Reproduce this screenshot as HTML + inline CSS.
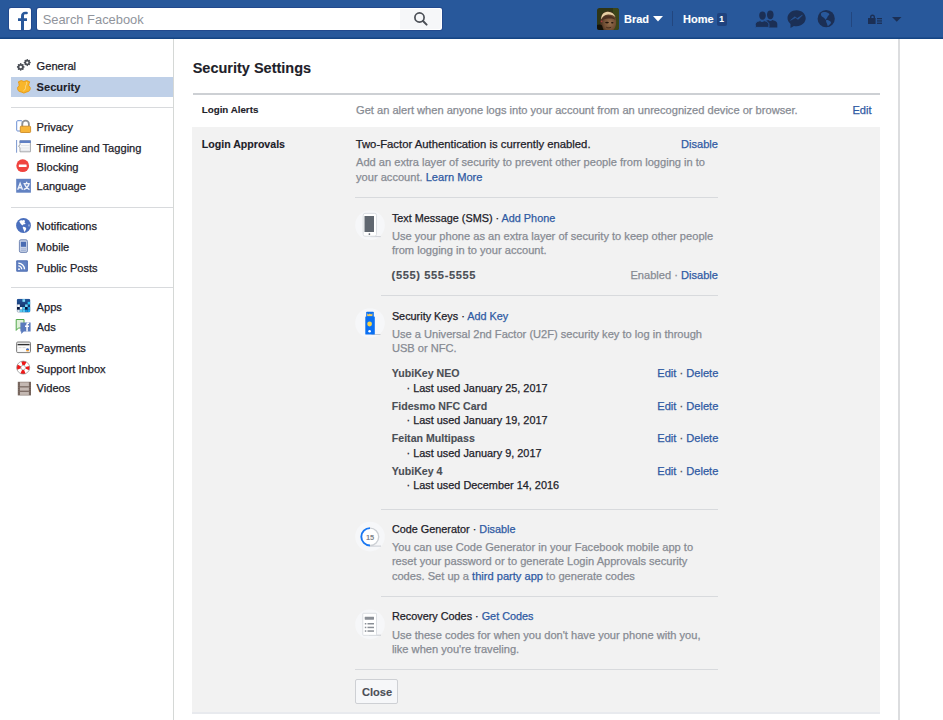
<!DOCTYPE html>
<html><head><meta charset="utf-8"><style>
html,body{margin:0;padding:0;width:943px;height:720px;overflow:hidden;background:#fff;position:relative}
body{font-family:"Liberation Sans",sans-serif}
.t{position:absolute;white-space:nowrap;font-family:"Liberation Sans",sans-serif;-webkit-text-stroke:0.25px currentColor}
.b{-webkit-text-stroke:0.12px currentColor}
</style></head><body>
<div style="position:absolute;left:0px;top:0px;width:943px;height:39px;background:#28589b;border-bottom:2px solid #154584;box-sizing:border-box"></div>
<div style="position:absolute;left:0px;top:36.5px;width:943px;height:1px;background:#1d4d8e"></div>
<div style="position:absolute;left:9px;top:8px;width:22px;height:22px;background:#fff;border-radius:2px;box-shadow:0 0 0 1px #22498d"></div>
<svg style="position:absolute;left:9px;top:8px" width="22" height="22" viewBox="0 0 22 22"><path d="M12 22V13H9v-2.800h3V8.200C12 5.400 13.700 3.800 16.300 3.800h1.300a1.250 1.250 0 010 2.500h-1.200c-.9 0-1.400.5-1.400 1.400v2.500h3V13h-3v9z" fill="#28589b"/></svg>
<div style="position:absolute;left:37px;top:8px;width:404.5px;height:22px;background:#fff;border-radius:2px;box-shadow:0 0 0 1px #22498d"></div>
<div style="position:absolute;left:400px;top:9px;width:40.5px;height:20px;background:#f6f7f9;border-radius:0 2px 2px 0"></div>
<div class="t" style="left:42.70px;top:10.63px;font-size:12.9px;line-height:17px;font-weight:normal;color:#90949c;-webkit-text-stroke:0">Search Facebook</div>
<svg style="position:absolute;left:412px;top:10px" width="18" height="18" viewBox="0 0 18 18"><circle cx="7.5" cy="7.5" r="4.6" fill="none" stroke="#4b4f56" stroke-width="1.7"/><path d="M11 11l3.6 3.6" stroke="#4b4f56" stroke-width="2" stroke-linecap="round"/></svg>
<svg style="position:absolute;left:597px;top:8px" width="22" height="22" viewBox="0 0 22 22"><defs><clipPath id="av"><rect width="22" height="22" rx="2.5"/></clipPath><radialGradient id="fg" cx="0.6" cy="0.62" r="0.55"><stop offset="0" stop-color="#96704e"/><stop offset=".7" stop-color="#6e4c32"/><stop offset="1" stop-color="#4a3220"/></radialGradient></defs><g clip-path="url(#av)"><rect width="22" height="22" fill="#2f3516"/><rect x="16" y="0" width="6" height="22" fill="#3c4619"/><path d="M3.800 22C2.600 15 3 9 5.500 5.800c2.800-3.300 8.500-3.300 11.200 0 2 2.500 2.800 6.500 2.300 10.500-.4 2.800-1.600 4.500-2.500 5.700z" fill="url(#fg)"/><path d="M4.200 11.500C4 7 6.500 4 10.500 3.800c4-.2 6.800 2 8 5.500-1.500-1.800-3.600-3-7.400-2.900C7.500 6.600 5.600 8.500 4.200 11.500z" fill="#e6cfa2"/><path d="M4.500 12.500c1-3.400 3.400-5 6.700-5.100 3.500 0 6 1.600 7.400 4.500-2.200-1.200-4.300-1.500-7.300-1.300-2.900.2-5.200.9-6.800 1.900z" fill="#4a3020"/><ellipse cx="10" cy="14.600" rx="1.900" ry=".8" fill="#23160c"/><ellipse cx="15.300" cy="14.800" rx="1.300" ry=".7" fill="#23160c"/><circle cx="4.600" cy="13.300" r=".9" fill="#a84040"/><path d="M0 22v-5c2.200-1 4-.5 5 .5l1.500 4.500z" fill="#141208"/><path d="M9.300 19.300c1.500.7 3.300.7 4.800 0" stroke="#3a2414" stroke-width=".8" fill="none"/></g></svg>
<div class="t b" style="left:624.00px;top:12.19px;font-size:11.0px;line-height:14px;font-weight:bold;color:#fff;">Brad</div>
<svg style="position:absolute;left:653px;top:16px" width="10" height="6" viewBox="0 0 10 6"><path d="M0 0h10L5 5.6z" fill="#fff"/></svg>
<div style="position:absolute;left:672px;top:11px;width:1px;height:15px;background:#22467f"></div>
<div class="t b" style="left:683.00px;top:12.19px;font-size:11.0px;line-height:14px;font-weight:bold;color:#fff;">Home</div>
<div style="position:absolute;left:717px;top:12.5px;width:9.5px;height:13px;background:#1f427e;border-radius:2px"></div>
<div class="t b" style="left:719.20px;top:14.15px;font-size:8.5px;line-height:11px;font-weight:bold;color:#fff;">1</div>
<svg style="position:absolute;left:0;top:0" width="943" height="40" viewBox="0 0 943 40"><g fill="#1b2f55" stroke="#28589b" stroke-width="1"><path d="M762.500 19.800c1.900 0 3.300-1.900 3.300-4.300 0-2.400-1.300-3.900-3.300-3.900s-3.300 1.500-3.300 3.900c0 2.400 1.400 4.300 3.300 4.300zM770.300 19.300c2 0 3.300-2.100 3.300-4.600 0-2.500-1.300-4.100-3.300-4.100s-3.300 1.600-3.300 4.100c0 2.500 1.300 4.600 3.300 4.600zM766.500 27.400h10.800v-3.300c0-1.800-1.400-2.800-3.500-3.500l-1.500-.5c-.6.700-1.300 1-2 1s-1.400-.3-2-1l-1.500.5c-1.200.4-2 1-2.400 1.700" stroke="none"/><path d="M755.300 27.400h13.600v-3c0-1.800-1.500-2.700-3.600-3.400l-1.200-.4c-.6.600-1.300.900-2 .900s-1.400-.3-2-.9l-1.200.4c-2.100.7-3.600 1.600-3.600 3.400z"/></g><path d="M796.600 10.300c-5 0-9.100 3.500-9.100 7.800 0 2.300 1.100 4.300 3 5.800v4.100l3.400-2.100c.900.2 1.800.3 2.700.3 5 0 9.100-3.500 9.100-7.900s-4.100-8-9.100-8z" fill="#1b2f55"/><path d="M790.500 20.300l4.300-3.600 2.300 1.900 5.300-3.500-4.300 4.400-2.300-1.900z" fill="#28589b" stroke="#28589b" stroke-width=".5" stroke-linejoin="round"/><circle cx="826.200" cy="18.700" r="8.600" fill="#1b2f55"/><path d="M821 13.500C822 12.300 824.500 11.800 826.500 12.300 828 12.700 829.500 13.500 829.300 14.800 828.500 15.500 827.800 16 827.500 17 827 18 826.300 19.200 825.500 19.800 824.800 19 824.500 18 823.500 17.500 822.300 17 821.300 16 821 15z" fill="#28589b"/><path d="M826.200 20C827.800 19.800 829.500 20.500 830.500 21.500 831.500 22.500 830.800 23.500 830 24.300 829.200 25 828.500 25.600 827.800 26.300 827.300 25.300 827.300 24.200 826.800 23.200 826.200 22.200 825.800 21 826.200 20z" fill="#28589b"/></svg>
<div style="position:absolute;left:851px;top:12px;width:1px;height:15px;background:#22467f"></div>
<svg style="position:absolute;left:868px;top:14px" width="15" height="10" viewBox="0 0 15 10"><path d="M2 4V3a2.5 2.5 0 015 0v1h.6v6H0V4zm1.4 0h2.2V3a1.1 1.1 0 00-2.2 0z" fill="#1b2f55"/><rect x="9" y="4" width="5" height="1.3" fill="#1b2f55"/><rect x="9" y="6.3" width="5" height="1.3" fill="#1b2f55"/><rect x="9" y="8.6" width="5" height="1.3" fill="#1b2f55"/></svg>
<svg style="position:absolute;left:892px;top:17px" width="10" height="5" viewBox="0 0 10 5"><path d="M0 0h9.5L4.75 4.8z" fill="#1b2f55"/></svg>
<div style="position:absolute;left:173px;top:39px;width:1px;height:681px;background:#d5d8d6"></div>
<div style="position:absolute;left:11px;top:77px;width:162px;height:20px;background:#bfd0e8"></div>
<div style="position:absolute;left:11px;top:107px;width:162px;height:1px;background:#d8dadd"></div>
<div style="position:absolute;left:11px;top:207px;width:162px;height:1px;background:#d8dadd"></div>
<div style="position:absolute;left:11px;top:287px;width:162px;height:1px;background:#d8dadd"></div>
<div class="t" style="left:36.60px;top:59.35px;font-size:11.1px;line-height:14px;font-weight:normal;color:#1d2129;">General</div>
<div class="t b" style="left:36.60px;top:80.35px;font-size:11.1px;line-height:14px;font-weight:bold;color:#1d2129;">Security</div>
<div class="t" style="left:36.60px;top:119.75px;font-size:11.1px;line-height:14px;font-weight:normal;color:#1d2129;">Privacy</div>
<div class="t" style="left:36.60px;top:140.85px;font-size:11.1px;line-height:14px;font-weight:normal;color:#1d2129;">Timeline and Tagging</div>
<div class="t" style="left:36.60px;top:160.25px;font-size:11.1px;line-height:14px;font-weight:normal;color:#1d2129;">Blocking</div>
<div class="t" style="left:36.60px;top:179.15px;font-size:11.1px;line-height:14px;font-weight:normal;color:#1d2129;">Language</div>
<div class="t" style="left:36.60px;top:219.45px;font-size:11.1px;line-height:14px;font-weight:normal;color:#1d2129;">Notifications</div>
<div class="t" style="left:36.60px;top:240.45px;font-size:11.1px;line-height:14px;font-weight:normal;color:#1d2129;">Mobile</div>
<div class="t" style="left:36.60px;top:261.05px;font-size:11.1px;line-height:14px;font-weight:normal;color:#1d2129;">Public Posts</div>
<div class="t" style="left:36.60px;top:299.65px;font-size:11.1px;line-height:14px;font-weight:normal;color:#1d2129;">Apps</div>
<div class="t" style="left:36.60px;top:319.95px;font-size:11.1px;line-height:14px;font-weight:normal;color:#1d2129;">Ads</div>
<div class="t" style="left:36.60px;top:340.85px;font-size:11.1px;line-height:14px;font-weight:normal;color:#1d2129;">Payments</div>
<div class="t" style="left:36.60px;top:361.65px;font-size:11.1px;line-height:14px;font-weight:normal;color:#1d2129;">Support Inbox</div>
<div class="t" style="left:36.60px;top:381.15px;font-size:11.1px;line-height:14px;font-weight:normal;color:#1d2129;">Videos</div>
<div class="t b" style="left:192.70px;top:59.37px;font-size:14.5px;line-height:19px;font-weight:bold;color:#1d2129;">Security Settings</div>
<div style="position:absolute;left:192.5px;top:93px;width:687.5px;height:1.5px;background:#cdd0d4"></div>
<div class="t b" style="left:201.80px;top:103.32px;font-size:9.75px;line-height:13px;font-weight:bold;color:#1d2129;">Login Alerts</div>
<div class="t" style="left:356.00px;top:103.15px;font-size:11.1px;line-height:14px;font-weight:normal;color:#878b93;">Get an alert when anyone logs into your account from an unrecognized device or browser.</div>
<div class="t" style="right:71.50px;top:103.35px;font-size:11.1px;line-height:14px;font-weight:normal;color:#2f5aa3;">Edit</div>
<div style="position:absolute;left:192px;top:127px;width:688px;height:585px;background:#f2f2f2"></div>
<div style="position:absolute;left:192px;top:712px;width:688px;height:1.5px;background:#e8eaee"></div>
<div class="t b" style="left:201.80px;top:136.82px;font-size:10.6px;line-height:14px;font-weight:bold;color:#1d2129;">Login Approvals</div>
<div class="t" style="left:355.70px;top:136.58px;font-size:11.3px;line-height:15px;font-weight:normal;color:#1d2129;">Two-Factor Authentication is currently enabled.</div>
<div class="t" style="right:225.00px;top:137.15px;font-size:11.1px;line-height:14px;font-weight:normal;color:#2f5aa3;">Disable</div>
<div class="t" style="left:356.00px;top:155.15px;font-size:11.1px;line-height:14px;font-weight:normal;color:#878b93;">Add an extra layer of security to prevent other people from logging in to</div>
<div class="t" style="left:356.00px;top:170.05px;font-size:11.1px;line-height:14px;font-weight:normal;color:#878b93;">your account. <span style="color:#2f5aa3">Learn More</span></div>
<div style="position:absolute;left:355px;top:197px;width:363px;height:1px;background:#d8dadd"></div>
<div class="t" style="left:391.90px;top:211.04px;font-size:10.85px;line-height:14px;font-weight:normal;color:#1d2129;">Text Message (SMS) · <span style="color:#2f5aa3">Add Phone</span></div>
<div class="t" style="left:391.90px;top:228.95px;font-size:11.1px;line-height:14px;font-weight:normal;color:#878b93;">Use your phone as an extra layer of security to keep other people</div>
<div class="t" style="left:391.90px;top:242.75px;font-size:11.1px;line-height:14px;font-weight:normal;color:#878b93;">from logging in to your account.</div>
<div class="t b" style="left:391.60px;top:268.15px;font-size:11.1px;line-height:14px;font-weight:bold;color:#4b4f56;letter-spacing:0.62px">(555) 555-5555</div>
<div class="t" style="right:225.00px;top:268.15px;font-size:11.1px;line-height:14px;font-weight:normal;color:#878b93;">Enabled · <span style="color:#2f5aa3">Disable</span></div>
<div style="position:absolute;left:381px;top:295px;width:337px;height:1px;background:#d8dadd"></div>
<div class="t" style="left:391.90px;top:308.64px;font-size:10.85px;line-height:14px;font-weight:normal;color:#1d2129;">Security Keys · <span style="color:#2f5aa3">Add Key</span></div>
<div class="t" style="left:391.90px;top:326.75px;font-size:11.1px;line-height:14px;font-weight:normal;color:#878b93;">Use a Universal 2nd Factor (U2F) security key to log in through</div>
<div class="t" style="left:391.90px;top:340.95px;font-size:11.1px;line-height:14px;font-weight:normal;color:#878b93;">USB or NFC.</div>
<div class="t b" style="left:391.80px;top:366.12px;font-size:10.6px;line-height:14px;font-weight:bold;color:#4b4f56;">YubiKey NEO</div>
<div class="t" style="left:406.50px;top:380.82px;font-size:10.9px;line-height:14px;font-weight:normal;color:#1d2129;">· Last used January 25, 2017</div>
<div class="t" style="right:224.70px;top:365.95px;font-size:11.1px;line-height:14px;font-weight:normal;color:#4b4f56;"><span style="color:#2f5aa3">Edit</span> · <span style="color:#2f5aa3">Delete</span></div>
<div class="t b" style="left:391.80px;top:399.32px;font-size:10.6px;line-height:14px;font-weight:bold;color:#4b4f56;">Fidesmo NFC Card</div>
<div class="t" style="left:406.50px;top:413.32px;font-size:10.9px;line-height:14px;font-weight:normal;color:#1d2129;">· Last used January 19, 2017</div>
<div class="t" style="right:224.70px;top:399.15px;font-size:11.1px;line-height:14px;font-weight:normal;color:#4b4f56;"><span style="color:#2f5aa3">Edit</span> · <span style="color:#2f5aa3">Delete</span></div>
<div class="t b" style="left:391.80px;top:431.12px;font-size:10.6px;line-height:14px;font-weight:bold;color:#4b4f56;">Feitan Multipass</div>
<div class="t" style="left:406.50px;top:446.12px;font-size:10.9px;line-height:14px;font-weight:normal;color:#1d2129;">· Last used January 9, 2017</div>
<div class="t" style="right:224.70px;top:430.95px;font-size:11.1px;line-height:14px;font-weight:normal;color:#4b4f56;"><span style="color:#2f5aa3">Edit</span> · <span style="color:#2f5aa3">Delete</span></div>
<div class="t b" style="left:391.80px;top:463.82px;font-size:10.6px;line-height:14px;font-weight:bold;color:#4b4f56;">YubiKey 4</div>
<div class="t" style="left:406.50px;top:478.42px;font-size:10.9px;line-height:14px;font-weight:normal;color:#1d2129;">· Last used December 14, 2016</div>
<div class="t" style="right:224.70px;top:463.65px;font-size:11.1px;line-height:14px;font-weight:normal;color:#4b4f56;"><span style="color:#2f5aa3">Edit</span> · <span style="color:#2f5aa3">Delete</span></div>
<div style="position:absolute;left:381px;top:509px;width:337px;height:1px;background:#d8dadd"></div>
<div class="t" style="left:391.90px;top:522.24px;font-size:10.85px;line-height:14px;font-weight:normal;color:#1d2129;">Code Generator · <span style="color:#2f5aa3">Disable</span></div>
<div class="t" style="left:391.90px;top:540.15px;font-size:11.1px;line-height:14px;font-weight:normal;color:#878b93;">You can use Code Generator in your Facebook mobile app to</div>
<div class="t" style="left:391.90px;top:554.45px;font-size:11.1px;line-height:14px;font-weight:normal;color:#878b93;">reset your password or to generate Login Approvals security</div>
<div class="t" style="left:391.90px;top:568.95px;font-size:11.1px;line-height:14px;font-weight:normal;color:#878b93;">codes. Set up a <span style="color:#2f5aa3">third party app</span> to generate codes</div>
<div style="position:absolute;left:381px;top:595.5px;width:337px;height:1px;background:#d8dadd"></div>
<div class="t" style="left:391.90px;top:608.94px;font-size:10.85px;line-height:14px;font-weight:normal;color:#1d2129;">Recovery Codes · <span style="color:#2f5aa3">Get Codes</span></div>
<div class="t" style="left:391.90px;top:627.85px;font-size:11.1px;line-height:14px;font-weight:normal;color:#878b93;">Use these codes for when you don't have your phone with you,</div>
<div class="t" style="left:391.90px;top:642.05px;font-size:11.1px;line-height:14px;font-weight:normal;color:#878b93;">like when you're traveling.</div>
<div style="position:absolute;left:355px;top:669px;width:363px;height:1px;background:#d8dadd"></div>
<div style="position:absolute;left:355px;top:679px;width:42.8px;height:24.6px;background:#f6f7f9;border:1px solid #ced0d4;border-radius:2px;box-sizing:border-box"></div>
<div class="t b" style="left:362.00px;top:684.65px;font-size:11.1px;line-height:14px;font-weight:bold;color:#4b4f56;">Close</div>
<svg style="position:absolute;left:0;top:0" width="943" height="720" viewBox="0 0 943 720"><circle cx="20.7" cy="66.9" r="2.96" fill="#4b4f56"/><circle cx="23.66" cy="66.90" r="0.89" fill="#4b4f56"/><circle cx="22.79" cy="68.99" r="0.89" fill="#4b4f56"/><circle cx="20.70" cy="69.86" r="0.89" fill="#4b4f56"/><circle cx="18.61" cy="68.99" r="0.89" fill="#4b4f56"/><circle cx="17.74" cy="66.90" r="0.89" fill="#4b4f56"/><circle cx="18.61" cy="64.81" r="0.89" fill="#4b4f56"/><circle cx="20.70" cy="63.94" r="0.89" fill="#4b4f56"/><circle cx="22.79" cy="64.81" r="0.89" fill="#4b4f56"/><circle cx="20.7" cy="66.9" r="1.25" fill="#fff"/><circle cx="27.25" cy="62.55" r="2.76" fill="#4b4f56"/><circle cx="30.01" cy="62.55" r="0.83" fill="#4b4f56"/><circle cx="29.20" cy="64.50" r="0.83" fill="#4b4f56"/><circle cx="27.25" cy="65.31" r="0.83" fill="#4b4f56"/><circle cx="25.30" cy="64.50" r="0.83" fill="#4b4f56"/><circle cx="24.49" cy="62.55" r="0.83" fill="#4b4f56"/><circle cx="25.30" cy="60.60" r="0.83" fill="#4b4f56"/><circle cx="27.25" cy="59.79" r="0.83" fill="#4b4f56"/><circle cx="29.20" cy="60.60" r="0.83" fill="#4b4f56"/><circle cx="27.25" cy="62.55" r="1.15" fill="#fff"/><path d="M18.400 81.800L21.200 80.600 23.900 81.500 26.700 80.600 29.700 81.800Q28.600 83.800 28.700 85.800Q30.300 87 30.300 88.300Q30.100 90.900 28.500 91.400Q26 92 23.900 93.100Q21.800 92 19.300 91.400Q17.700 90.900 17.500 88.300Q17.500 87 19.100 85.800Q19.200 83.800 18.400 81.800Z" fill="#f8b62b" stroke="#e8960f" stroke-width=".9" stroke-linejoin="round"/><path d="M26.400 82c.6 1.200.2 2.400-.5 3.400-.8 1.100-.1 2.100-.5 3.200-.3 1-1.100 1.800-2 2.300" stroke="#fddb8a" stroke-width=".9" fill="none"/><rect x="16.700" y="120.700" width="5.600" height="10.300" rx="1" fill="#fff" stroke="#6b8fd4" stroke-width="1"/><path d="M22.300 126.300v-2.300a3.300 3.300 0 016.600 0v2.300" fill="none" stroke="#8e9092" stroke-width="1.800"/><rect x="20.300" y="126.200" width="10.300" height="6.300" rx=".8" fill="#f7b538" stroke="#c98318" stroke-width=".8"/><rect x="16.1" y="140" width="1" height="12.7" fill="#7b97cf"/><path d="M20 140.8h10.4v11h-10.4v-4.300l-1.600-1.300 1.600-1.300z" fill="#f6f7f9" stroke="#9a9da3" stroke-width=".9"/><rect x="19.6" y="140.4" width="11.2" height="2.6" fill="#5f80c4"/><path d="M21 145.500h8.500M21 148h8.500M21 150.300h8.500" stroke="#dcdfe4" stroke-width=".8"/><circle cx="22.7" cy="165.7" r="6.4" fill="#f0433e"/><rect x="18.8" y="164.6" width="7.8" height="2.3" rx=".5" fill="#fff"/><rect x="16.2" y="178.8" width="14.7" height="13.9" fill="#6282c2"/><g stroke="#eef2fa" stroke-width="1.35" fill="none"><path d="M17.700 189.700l2.400-6.300 2.400 6.300M18.600 187.700h3"/><path d="M23.500 183.600h6.300M26.600 181.700v1.900M24.600 184.300c.8 2.400 2.300 4.100 4.900 5.300M29 184.300c-.8 2.400-2.300 4.100-5.300 5.300"/></g><circle cx="23.5" cy="225.5" r="7.4" fill="#4a6fbd"/><path d="M19.300 221.200c.6-.8 1.800-1.100 2.700-.9.5.3 1 .2 1.500-.2.7 0 1.300.4 1.500 1 .1.7-.6 1-.4 1.600.3.5.9.3 1 .9-.1.700-.9.800-1.500.600-.6 0-1.100.5-1.300 1.100-.4.200-.9-.2-1.200-.6-.6-.6-1.300-1.100-1.600-1.900-.3-.5-.6-1-.7-1.600z" fill="#fff"/><path d="M22.800 226.900c.9-.3 2 .1 2.800.7.8.6.700 1.600.200 2.400-.5.7-.9 1.300-1.200 2-.6-.4-.7-1.200-.9-1.900-.2-.9-.9-1.700-.9-2.600z" fill="#fff"/><ellipse cx="29" cy="225.400" rx=".8" ry="1.200" fill="#9fb3dd"/><rect x="19.400" y="239.800" width="8" height="12.600" rx="1.500" fill="#c9d3e8" stroke="#7489b6" stroke-width="1"/><rect x="20.900" y="241.800" width="5.100" height="5" fill="#4a6cb3"/><path d="M20.900 248.900h5.100M20.900 250.600h5.100" stroke="#8ea2cc" stroke-width=".7"/><rect x="16.200" y="260.200" width="11.700" height="11.600" rx="1" fill="#4d6db3"/><rect x="17.300" y="261.300" width="9.500" height="9.400" fill="#6383c3"/><path d="M18.300 263.100a6.200 6.200 0 016.200 6.200M18.300 265.900a3.400 3.400 0 013.400 3.400" fill="none" stroke="#fff" stroke-width="1.300"/><circle cx="19" cy="269.200" r=".9" fill="#fff"/><defs><linearGradient id="apg" x1="0" y1="0" x2="0" y2="1"><stop offset="0" stop-color="#24569c"/><stop offset="1" stop-color="#0b2150"/></linearGradient><clipPath id="apc"><rect x="16.7" y="298.7" width="13.7" height="13.7" rx="1.6"/></clipPath></defs><g clip-path="url(#apc)"><rect x="16.7" y="298.7" width="13.7" height="13.7" fill="url(#apg)"/><rect x="22.44" y="299.20" width="2.62" height="2.62" fill="#7fdaf7"/><rect x="27.68" y="301.82" width="2.62" height="2.62" fill="#25c4f5"/><rect x="17.20" y="304.44" width="2.62" height="2.62" fill="#ffffff"/><rect x="25.06" y="304.44" width="2.62" height="2.62" fill="#6fd6f5"/><rect x="17.20" y="307.06" width="2.62" height="2.62" fill="#061236"/><rect x="19.82" y="307.06" width="2.62" height="2.62" fill="#f0f4f8"/><rect x="22.44" y="307.06" width="2.62" height="2.62" fill="#4fc8f2"/><rect x="25.06" y="307.06" width="2.62" height="2.62" fill="#061236"/><rect x="27.68" y="307.06" width="2.62" height="2.62" fill="#1a9de0"/><rect x="17.20" y="309.68" width="2.62" height="2.62" fill="#dfe8ee"/><rect x="19.82" y="309.68" width="2.62" height="2.62" fill="#56c8f0"/><rect x="22.44" y="309.68" width="2.62" height="2.62" fill="#56c8f0"/><rect x="25.06" y="309.68" width="2.62" height="2.62" fill="#1a8fd8"/><rect x="27.68" y="309.68" width="2.62" height="2.62" fill="#1aa0e8"/></g><path d="M16.200 319.500h7.800v8.500h-5.600l-2.200 2.400z" fill="#dff0d8" stroke="#52a84a" stroke-width="1"/><path d="M20.400 322.600h10.200v8.800h-6.800l-2.600 2.500v-2.500h-.8z" fill="#5a7bbd"/><path d="M26.300 331.400v-4.400h-1.300v-1.500h1.300v-1.100c0-1.300.8-1.900 1.900-1.900h.9v1.500h-.7c-.5 0-.6.300-.6.600v.9h1.300l-.2 1.500h-1.100v4.400z" fill="#fff"/><rect x="16.600" y="342" width="13.900" height="10.600" rx="1.200" fill="#e6e6e6" stroke="#7d7d7d" stroke-width="1"/><rect x="17.600" y="344" width="11.900" height="1.300" fill="#2f2f2f"/><rect x="17.600" y="345.800" width="11.900" height="6" fill="#fbfbfb"/><path d="M18.500 347.600h3M22.500 347.600h3" stroke="#c9c9c9" stroke-width=".7"/><path d="M26 350a1.550 1.550 0 013.100 0z" fill="#f2a23a"/><path d="M26 350a1.550 1.550 0 003.100 0z" fill="#f2a23a"/><path d="M26 349.900a1.550 1.550 0 013.100 0z" fill="#3b6fd0"/><circle cx="23.200" cy="367.600" r="4.400" fill="none" stroke="#fff" stroke-width="4.200"/><circle cx="23.200" cy="367.600" r="4.400" fill="none" stroke="#f01818" stroke-width="4.200" stroke-dasharray="3.700 3.211" stroke-dashoffset="1.850"/><circle cx="23.200" cy="367.600" r="6.500" fill="none" stroke="#8c8c8c" stroke-width=".7"/><circle cx="23.200" cy="367.600" r="2.300" fill="#fff" stroke="#8c8c8c" stroke-width=".6"/><rect x="17.800" y="381.800" width="13.200" height="13.600" fill="#6f5e56"/><rect x="19.900" y="382.300" width="9" height="12.600" fill="#c4b8b2"/><rect x="19.900" y="386.300" width="9" height="1.100" fill="#6f5e56"/><rect x="19.900" y="390.700" width="9" height="1.100" fill="#6f5e56"/><path d="M18.850 382.500v12.400M29.950 382.500v12.400" stroke="#9a8a82" stroke-width=".7" stroke-dasharray="1 1.200"/><circle cx="370" cy="225.2" r="14.8" fill="#f6f7f9"/><path d="M370.500 236.600h10.300" stroke="#c8ccd2" stroke-width=".9"/><rect x="363.200" y="213.400" width="13.300" height="22.800" rx="1.800" fill="#fff" stroke="#d8dbe0" stroke-width=".9"/><rect x="364.500" y="216" width="9.500" height="16" fill="#606770"/><circle cx="369.400" cy="234.100" r=".9" fill="#606770"/><circle cx="370" cy="323" r="14.8" fill="#f6f7f9"/><path d="M371.500 334.500h9" stroke="#c8ccd2" stroke-width="1"/><rect x="366.200" y="311.800" width="7.600" height="5.500" rx=".8" fill="#0a6ff2"/><path d="M367.200 313.300l1.300 1.300 1.300-1.100 1.300 1.100 1.300-1.300v3h-5.200z" fill="#f5cc5a"/><rect x="365.300" y="316.500" width="9.500" height="18" rx=".6" fill="#0a6ff2"/><circle cx="369.600" cy="324" r="2.400" fill="#f7d247"/><circle cx="369.600" cy="331.300" r="1.300" fill="#fff"/><circle cx="370" cy="536.6" r="14.8" fill="#f6f7f9"/><path d="M370 546.100h11" stroke="#c8ccd2" stroke-width="1"/><circle cx="370" cy="536.800" r="8.700" fill="#fff"/><path d="M370 528.100a8.700 8.700 0 010 17.400" fill="none" stroke="#ccd0d5" stroke-width="1.4"/><path d="M370 545.500a8.700 8.700 0 010-17.400" fill="none" stroke="#1877f2" stroke-width="1.9"/><text x="370" y="539.600" text-anchor="middle" font-family="Liberation Sans" font-size="7.4" font-weight="bold" fill="#7f848b">15</text><circle cx="370" cy="624.4" r="14.8" fill="#f6f7f9"/><path d="M369 635.200h12" stroke="#c8ccd2" stroke-width="1"/><rect x="362.800" y="613.300" width="13.700" height="22" rx=".6" fill="#fff" stroke="#d8dbe0" stroke-width=".9"/><rect x="364.700" y="616.700" width="9.300" height="3" rx=".4" fill="#8a8f96"/><g fill="#8a8f96"><rect x="364.800" y="623" width="1.500" height="1.500"/><rect x="367.500" y="623" width="6.500" height="1.500"/><rect x="364.800" y="626.700" width="1.500" height="1.500"/><rect x="367.500" y="626.700" width="6.500" height="1.500"/><rect x="364.800" y="630.300" width="1.500" height="1.500"/><rect x="367.500" y="630.300" width="6.500" height="1.500"/></g></svg>
<div style="position:absolute;left:898px;top:39px;width:2px;height:681px;background:#dcdddf"></div>
</body></html>
